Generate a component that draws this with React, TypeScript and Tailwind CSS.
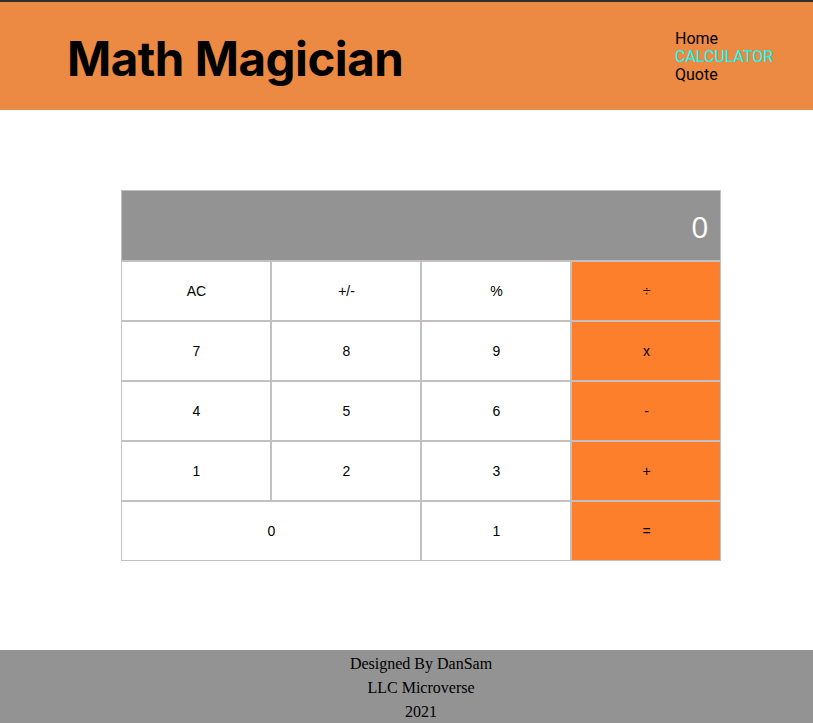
import React from "react";

const keys = [
  { label: "AC" },
  { label: "+/-" },
  { label: "%" },
  { label: "÷", op: true },
  { label: "7" },
  { label: "8" },
  { label: "9" },
  { label: "x", op: true },
  { label: "4" },
  { label: "5" },
  { label: "6" },
  { label: "-", op: true },
  { label: "1" },
  { label: "2" },
  { label: "3" },
  { label: "+", op: true },
  { label: "0", wide: true },
  { label: "1" },
  { label: "=", op: true },
];

const App = () => {
  return (
    <div className="min-h-[723px] flex flex-col bg-white font-['Inter',sans-serif]">
      <header className="h-[110px] border-t-2 border-[#2e2e2e] bg-[#ec8a43] flex justify-between items-center pl-[67px] pr-[37px]">
        <h1 className="text-[47.5px] font-bold text-black tracking-[-0.5px] leading-none mt-[6px]">
          Math Magician
        </h1>
        <nav className="flex flex-col text-[16px] leading-[18px] w-[101px] mt-[2px] font-['Roboto',sans-serif]">
          <a className="text-black">Home</a>
          <a className="text-[#00ffff]">CALCULATOR</a>
          <a className="text-black">Quote</a>
        </nav>
      </header>

      <main className="flex-1 flex justify-center pt-[80px]">
        <div className="w-[600px] h-[371px] ml-[29px] mr-[1px] flex flex-col">
          <div className="h-[71px] bg-[#939393] border border-[#c4c0c0] flex items-center justify-end pr-[11px] pt-[2px]">
            <span className="text-white text-[30px] font-['Open_Sans',sans-serif]">0</span>
          </div>
          <div className="grid grid-cols-4 font-['Liberation_Sans',sans-serif] text-[14px] text-black">
            {keys.map((k, i) => (
              <button
                key={i}
                className={
                  "h-[60px] border border-[#c4c0c0] flex items-center justify-center pl-[2px] " +
                  (k.wide ? "col-span-2 " : "") +
                  (k.op ? "bg-[#fd7f2c]" : "bg-white")
                }
              >
                {k.label}
              </button>
            ))}
          </div>
        </div>
      </main>

      <footer className="h-[73px] bg-[#939393] flex flex-col items-center pt-[2px] pl-[29px] font-['Liberation_Serif',serif] text-[16px] leading-[24px] text-black">
        <p>Designed By DanSam</p>
        <p>LLC Microverse</p>
        <p>2021</p>
      </footer>
    </div>
  );
};

export default App;
